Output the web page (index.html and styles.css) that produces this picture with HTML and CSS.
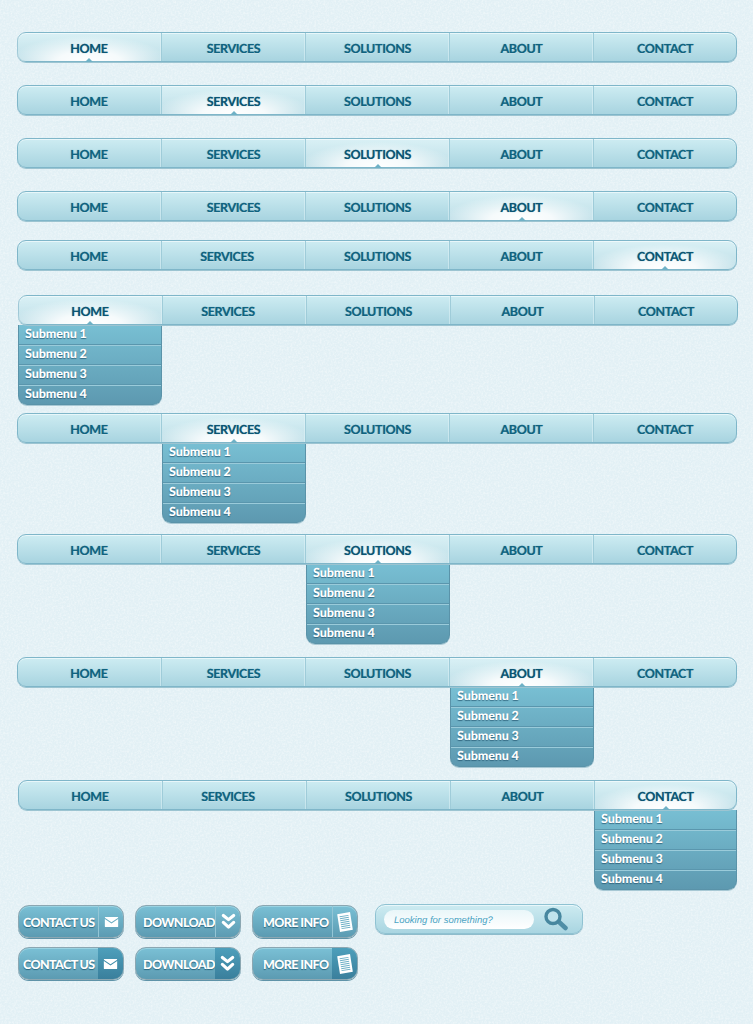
FILE: index.html
```html
<!DOCTYPE html>
<html lang="en">
<head>
<meta charset="utf-8">
<title>Navigation kit</title>
<link rel="stylesheet" href="styles.css">
</head>
<body>
<svg class="defs" width="0" height="0" aria-hidden="true">
  <symbol id="i-mail" viewBox="0 0 16 12"><path fill="#fff" d="M0 .8 8 6.200 16 .8V.5a.5.5 0 0 0-.5-.5H.5A.5.5 0 0 0 0 .5Z"/><path fill="#fff" d="M0 2.400V11.500a.5.5 0 0 0 .5.5h15a.5.5 0 0 0 .5-.5V2.400L8 7.800Z"/></symbol>
  <symbol id="i-down" viewBox="0 0 16 18"><path fill="none" stroke="#fff" stroke-width="3.400" stroke-linecap="round" stroke-linejoin="round" d="M2.500 2.500 8 7l5.500-4.500M2.500 10 8 15l5.500-5"/></symbol>
  <symbol id="i-doc" viewBox="0 0 18 20"><g transform="rotate(-9 9 10)"><rect x="2.500" y="1" width="13" height="18" fill="#fff"/><path stroke="#6fb0c6" stroke-width="1" d="M4.500 4h9M4.500 6h9M4.500 8h9M4.500 10h9M4.500 12h9M4.500 14h9M4.500 16h9"/></g></symbol>
</svg>

<main class="page">
  <nav class="bar r1"><a class="tab on">Home</a><a class="tab">Services</a><a class="tab">Solutions</a><a class="tab">About</a><a class="tab">Contact</a></nav>
  <nav class="bar r2"><a class="tab">Home</a><a class="tab on">Services</a><a class="tab">Solutions</a><a class="tab">About</a><a class="tab">Contact</a></nav>
  <nav class="bar r2"><a class="tab">Home</a><a class="tab">Services</a><a class="tab on">Solutions</a><a class="tab">About</a><a class="tab">Contact</a></nav>
  <nav class="bar r2"><a class="tab">Home</a><a class="tab">Services</a><a class="tab">Solutions</a><a class="tab on">About</a><a class="tab">Contact</a></nav>
  <nav class="bar r5 shift"><a class="tab">Home</a><a class="tab">Services</a><a class="tab">Solutions</a><a class="tab">About</a><a class="tab on">Contact</a></nav>

  <section class="menu m1 inset">
    <nav class="bar shift"><a class="tab on">Home</a><a class="tab">Services</a><a class="tab">Solutions</a><a class="tab">About</a><a class="tab">Contact</a></nav>
    <ul class="sub col1"><li>Submenu 1</li><li>Submenu 2</li><li>Submenu 3</li><li>Submenu 4</li></ul>
  </section>
  <section class="menu m2">
    <nav class="bar"><a class="tab">Home</a><a class="tab on">Services</a><a class="tab">Solutions</a><a class="tab">About</a><a class="tab">Contact</a></nav>
    <ul class="sub col2"><li>Submenu 1</li><li>Submenu 2</li><li>Submenu 3</li><li>Submenu 4</li></ul>
  </section>
  <section class="menu m3">
    <nav class="bar"><a class="tab">Home</a><a class="tab">Services</a><a class="tab on">Solutions</a><a class="tab">About</a><a class="tab">Contact</a></nav>
    <ul class="sub col3"><li>Submenu 1</li><li>Submenu 2</li><li>Submenu 3</li><li>Submenu 4</li></ul>
  </section>
  <section class="menu m4">
    <nav class="bar"><a class="tab">Home</a><a class="tab">Services</a><a class="tab">Solutions</a><a class="tab on">About</a><a class="tab">Contact</a></nav>
    <ul class="sub col4"><li>Submenu 1</li><li>Submenu 2</li><li>Submenu 3</li><li>Submenu 4</li></ul>
  </section>
  <section class="menu m5 inset">
    <nav class="bar shift"><a class="tab">Home</a><a class="tab">Services</a><a class="tab">Solutions</a><a class="tab">About</a><a class="tab on">Contact</a></nav>
    <ul class="sub col5"><li>Submenu 1</li><li>Submenu 2</li><li>Submenu 3</li><li>Submenu 4</li></ul>
  </section>

  <section class="controls">
    <div class="btn-grid">
      <a class="btn b1">Contact Us<span class="ico"><svg width="15" height="10"><use href="#i-mail"/></svg></span></a>
      <a class="btn b2">Download<span class="ico"><svg width="15" height="17"><use href="#i-down"/></svg></span></a>
      <a class="btn b3">More Info<span class="ico"><svg width="18" height="20"><use href="#i-doc"/></svg></span></a>
      <a class="btn b1 hover">Contact Us<span class="ico"><svg width="15" height="10"><use href="#i-mail"/></svg></span></a>
      <a class="btn b2 hover">Download<span class="ico"><svg width="15" height="17"><use href="#i-down"/></svg></span></a>
      <a class="btn b3 hover">More Info<span class="ico"><svg width="18" height="20"><use href="#i-doc"/></svg></span></a>
    </div>
    <form class="search">
      <span class="field">Looking for something?</span>
      <svg class="lens" width="26" height="24" viewBox="0 0 26 24"><path stroke="#4f8ea6" stroke-width="4.500" stroke-linecap="round" d="M15.500 14.500 22.500 21"/><circle cx="10" cy="9.500" r="7" fill="#bfe3ec" stroke="#47879f" stroke-width="3.400"/></svg>
    </form>
  </section>
</main>
</body>
</html>
```
FILE: styles.css
```css
* { box-sizing: border-box; }
html, body { margin: 0; padding: 0; }
body {
  background-color: #e2f0f5;
  background-image: url("data:image/svg+xml,%3Csvg xmlns='http://www.w3.org/2000/svg' width='240' height='240'%3E%3Cfilter id='n'%3E%3CfeTurbulence type='fractalNoise' baseFrequency='.55' numOctaves='3' stitchTiles='stitch'/%3E%3CfeColorMatrix values='0 0 0 0 1 0 0 0 0 1 0 0 0 0 1 0 0 0 1.600 -.62'/%3E%3C/filter%3E%3Crect width='240' height='240' filter='url(%23n)' opacity='.55'/%3E%3C/svg%3E");
  font-family: Lato, "Liberation Sans", sans-serif;
  text-rendering: geometricPrecision;
  width: 753px;
  height: 1024px;
  overflow: hidden;
}
.defs { position: absolute; }
.page { padding: 32px 16px 0 17px; }

.bar {
  display: grid;
  grid-template-columns: repeat(4, 144px) 1fr;
  height: 30px;
  width: 720px;
  border: 1px solid #7fb6c9;
  border-radius: 9px;
  background: linear-gradient(#cdecf2, #a8d4e0);
  box-shadow: inset 0 1px 0 #e8f7fa, 0 1px 0 #9cc4d1;
  position: relative;
}
.tab {
  display: flex;
  align-items: center;
  justify-content: center;
  position: relative;
  padding-top: 2px;
  border-right: 1px solid #9fccd9;
  box-shadow: inset -1px 0 0 rgba(226,244,248,.5);
  color: #0f6380;
  font-size: 12.500px;
  font-weight: 700;
  letter-spacing: -.35px;
  text-transform: uppercase;
  text-shadow: 0 0 1px rgba(15,99,128,.6), 0 1px 0 rgba(255,255,255,.35);
}
.tab:last-child { border-right: 0; box-shadow: none; }
.tab:first-child { margin-left: -1px; }
.on {
  background:
    radial-gradient(ellipse 55% 90% at 50% 100%, #fff 0, rgba(255,255,255,.85) 40%, rgba(255,255,255,0) 100%),
    linear-gradient(rgba(255,255,255,.25), rgba(255,255,255,.25));
  color: #0a5573;
}
.on::after {
  content: "";
  position: absolute;
  left: 50%;
  bottom: -1px;
  margin-left: -4px;
  border: 4px solid transparent;
  border-top: 0;
  border-bottom-color: #6fb1c6;
}
.on:first-child { border-radius: 8px 0 0 8px; }
.on:last-child { border-radius: 0 8px 8px 0; }

.r1, .r2 { margin-bottom: 23px; }
.r5 { margin-top: -4px; margin-bottom: 25px; }
.shift .tab:nth-child(2) { padding-right: 13px; }

.menu { position: relative; }
.inset { margin-left: 1px; }
.m2 { margin-top: 8px; }
.m3 { margin-top: 11px; }
.m4 { margin-top: 13px; }
.m5 { margin-top: 13px; }
.m5 .bar { width: 719px; }

.sub {
  list-style: none;
  margin: 0;
  padding: 0;
  width: 144px;
  height: 80px;
  background: linear-gradient(#78bfd3, #5d99b0);
  border: 1px solid #5a93a9;
  border-top: 0;
  border-radius: 0 0 9px 9px;
  box-shadow: 0 1px 0 #a7c8d4;
  display: flex;
  flex-direction: column;
  color: #fff;
  font-size: 12.500px;
  font-weight: 900;
  letter-spacing: -.1px;
  text-shadow: 0 1px 1px rgba(30,80,105,.7);
}
.sub li {
  flex: 1;
  display: flex;
  align-items: center;
  padding: 0 0 2px 6px;
  border-bottom: 1px solid #5a96ad;
  box-shadow: 0 1px 0 #9acbda;
}
.sub li:last-child { border-bottom: 0; box-shadow: none; }
.col2 { margin-left: 145px; }
.col3 { margin-left: 289px; }
.col4 { margin-left: 433px; }
.col5 { margin-left: 576px; width: 143px; }

.controls {
  display: flex;
  align-items: flex-start;
  gap: 17px;
  margin-top: 15px;
  margin-left: 1px;
}
.btn-grid {
  display: grid;
  grid-template-columns: repeat(3, 106px);
  grid-auto-rows: 33px;
  column-gap: 11px;
  row-gap: 9px;
}
.btn {
  display: flex;
  align-items: center;
  justify-content: space-between;
  height: 33px;
  padding: 2px 0 0 4px;
  border: 1px solid #8ba7b2;
  border-radius: 11px;
  background: linear-gradient(#7ac0d5, #5c9bb2);
  box-shadow: 0 1px 0 #5f93a8, inset 0 1px 0 #9ad3e2;
  color: #fff;
  font-size: 12.500px;
  font-weight: 900;
  letter-spacing: -.6px;
  text-transform: uppercase;
  text-shadow: 0 1px 1px rgba(25,85,110,.8);
  white-space: nowrap;
  overflow: hidden;
}
.b2 { padding-left: 7px; }
.b3 { padding-left: 10px; }
.ico {
  width: 25px;
  margin-top: -2px;
  align-self: stretch;
  display: flex;
  align-items: center;
  justify-content: center;
  border-left: 1px solid #94c6d6;
  flex: none;
}
.hover .ico {
  border-left: 0;
  background: linear-gradient(#4d9fbb, #3a7f9c);
}
.search {
  width: 208px;
  height: 30px;
  margin-top: -1px;
  display: flex;
  align-items: center;
  gap: 9px;
  padding: 0 13px 0 8px;
  border: 1px solid #8fc2d2;
  border-radius: 10px;
  background: linear-gradient(#cdebf1, #a9d5e1);
  box-shadow: inset 0 1px 0 #e8f7fa, 0 1px 0 #8fbccb;
}
.field {
  width: 152px;
  height: 19px;
  display: flex;
  align-items: center;
  padding: 2px 0 0 10px;
  border-radius: 10px;
  background: linear-gradient(#e9f6f9, #ffffff);
  color: #4aa3c3;
  font-family: "Liberation Sans", sans-serif;
  font-size: 9.500px;
  font-style: italic;
}
.lens { flex: none; }
```
